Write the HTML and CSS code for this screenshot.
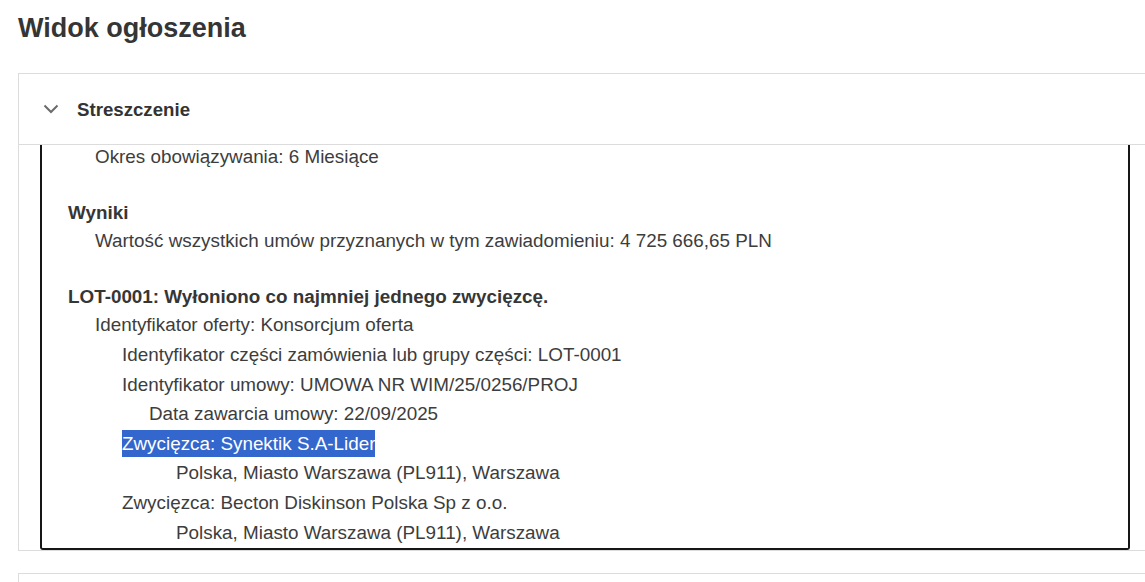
FILE: index.html
```html
<!DOCTYPE html>
<html lang="pl">
<head>
<meta charset="utf-8">
<title>Widok ogłoszenia</title>
<link rel="stylesheet" href="styles.css">
</head>
<body>
<div class="page">
  <h1 class="title">Widok ogłoszenia</h1>
  <section class="panel">
    <div class="panel-header">
      <svg class="chevron" width="16" height="10" viewBox="0 0 16 10"><path d="M1.5 1.5 L8 8 L14.5 1.5" fill="none" stroke="#6b6b6b" stroke-width="2"/></svg>
      <span class="panel-title">Streszczenie</span>
    </div>
    <div class="panel-body">
      <div class="viewer">
        <div class="block first">
          <div class="ln d1">Okres obowiązywania: 6 Miesiące</div>
        </div>
        <div class="block">
          <div class="ln d0 b">Wyniki</div>
          <div class="ln d1">Wartość wszystkich umów przyznanych w tym zawiadomieniu: 4 725 666,65 PLN</div>
        </div>
        <div class="block">
          <div class="ln d0 b">LOT-0001: Wyłoniono co najmniej jednego zwycięzcę.</div>
          <div class="ln d1">Identyfikator oferty: Konsorcjum oferta</div>
          <div class="sub">
            <div class="ln d2">Identyfikator części zamówienia lub grupy części: LOT-0001</div>
            <div class="ln d2">Identyfikator umowy: UMOWA NR WIM/25/0256/PROJ</div>
            <div class="ln d3">Data zawarcia umowy: 22/09/2025</div>
            <div class="ln d2"><span class="sel">Zwycięzca: Synektik S.A-Lider</span></div>
            <div class="ln d4">Polska, Miasto Warszawa (PL911), Warszawa</div>
            <div class="ln d2">Zwycięzca: Becton Diskinson Polska Sp z o.o.</div>
            <div class="ln d4">Polska, Miasto Warszawa (PL911), Warszawa</div>
          </div>
        </div>
      </div>
    </div>
  </section>
  <section class="panel next"></section>
</div>
</body>
</html>
```
FILE: styles.css
```css
html, body {
  margin: 0;
  padding: 0;
  background: #ffffff;
}
html {
  height: 582px;
  overflow: hidden;
}
body {
  font-family: "Liberation Sans", Arial, sans-serif;
  color: #3d3d3d;
  height: 582px;
  overflow: hidden;
}
.page {
  width: 1160px;
  padding: 13px 0 0 18px;
}
.title {
  margin: 0;
  font-size: 27px;
  line-height: 31px;
  font-weight: bold;
  color: #353535;
  height: 60px;
}
.panel {
  border: 1px solid #dcdcdc;
  background: #fff;
}
.panel-header {
  height: 70px;
  display: flex;
  align-items: center;
  border-bottom: 1px solid #dcdcdc;
  padding-left: 24px;
}
.chevron {
  display: block;
  margin-top: 0;
}
.panel-title {
  margin-left: 18px;
  font-size: 18.66px;
  font-weight: bold;
  color: #333;
  margin-top: 1px;
}
.panel-body {
  padding: 0 0 0 21px;
  width: 1090px;
}
.viewer {
  box-sizing: border-box;
  height: 405px;
  border: 2px solid #161616;
  border-top: none;
  border-radius: 0 0 3px 3px;
  overflow: hidden;
  padding-left: 26px;
  font-size: 18.85px;
}
.block {
  margin-top: 28px;
}
.block.first {
  margin-top: -2px;
}
.ln {
  line-height: 28px;
  white-space: nowrap;
}
.sub .ln {
  line-height: 29.6px;
}
.sub {
  margin-top: 1px;
}
.b {
  font-weight: bold;
  color: #363636;
}
.d0 { padding-left: 0; }
.d1 { padding-left: 27px; }
.d2 { padding-left: 54px; }
.d3 { padding-left: 81px; }
.d4 { padding-left: 108px; }
.sel {
  background: #3367cd;
  color: #ffffff;
  display: inline-block;
  line-height: 27px;
}
.panel.next {
  margin-top: 22px;
  height: 8px;
}
```
